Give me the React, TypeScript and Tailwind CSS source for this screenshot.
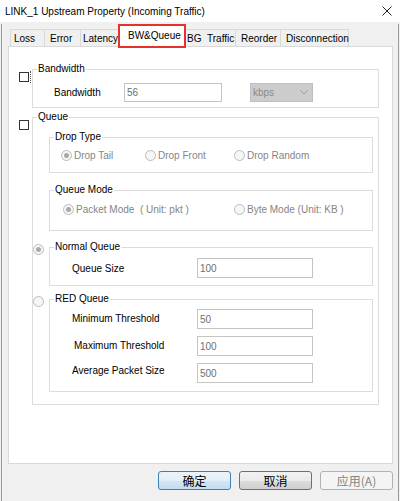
import type { ReactNode } from 'react';

function CheckBox() {
  return <span className="block w-[10px] h-[10px] border border-[#333333] bg-white" />;
}

function Radio({ checked = false }: { checked?: boolean }) {
  return (
    <span className="flex w-[11px] h-[11px] shrink-0 items-center justify-center rounded-full border border-[#bcbcbc] bg-[#f6f6f6]">
      {checked && <span className="block w-[5px] h-[5px] rounded-full bg-[#a9a9a9]" />}
    </span>
  );
}

function Group({ title, className, children }: { title: string; className: string; children?: ReactNode }) {
  return (
    <fieldset className={`border border-[#dcdcdc] ${className}`}>
      <legend className="ml-[4px] px-[1px] leading-[12px] text-black">{title}</legend>
      {children}
    </fieldset>
  );
}

function Field({ value, className }: { value: string; className: string }) {
  return (
    <div className={`flex items-center border border-[#c4c4c4] bg-white pl-[2px] text-[#707070] ${className}`}>
      {value}
    </div>
  );
}

function Option({ label, checked, className }: { label: string; checked?: boolean; className: string }) {
  return (
    <div className={`flex items-center gap-[2px] text-[#858585] ${className}`}>
      <Radio checked={checked} />
      <span className="whitespace-pre">{label}</span>
    </div>
  );
}

const tabs = [
  { label: 'Loss', w: 'w-[35px]', pl: 'pl-[3px]' },
  { label: 'Error', w: 'w-[37px]', pl: 'pl-[5px]' },
  { label: 'Latency', w: 'w-[39px]', pl: 'pl-[2px]' },
  { label: 'BW&Queue', w: 'w-[68px]', pl: 'pl-[8px]', active: true },
  { label: 'BG\u00a0\u00a0Traffic', w: 'w-[51px]', pl: 'pl-[1px]' },
  { label: 'Reorder', w: 'w-[46px]', pl: 'pl-[5px]' },
  { label: 'Disconnection', w: 'w-[69px]', pl: 'pl-[5px]' },
];

export default function App() {
  return (
    <div className="w-[400px] h-[501px] bg-[#f0f0f0] font-['Liberation_Sans',Arial,sans-serif] text-[10px] text-black overflow-hidden">
      {/* title bar */}
      <div className="flex h-[22px] items-center bg-white pl-[5px] pr-[8px]">
        <span>LINK_1 Upstream Property (Incoming Traffic)</span>
        <svg className="ml-auto" width="10" height="10" viewBox="0 0 10 10">
          <path d="M0.5 0.5L9.5 9.5M9.5 0.5L0.5 9.5" stroke="#222" strokeWidth="1" />
        </svg>
      </div>

      <div className="mx-[1px] h-[478px] border-x border-b border-[#9a9a9a] bg-[#f0f0f0]">
        {/* tabs */}
        <div className="mt-[2px] flex h-[22px] items-end pl-[8px]">
          {tabs.map((t, i) =>
            t.active ? (
              <div
                key={t.label}
                className={`relative z-10 -ml-px -mb-[2px] flex h-[24px] items-center self-end border-2 border-[#e5322d] bg-white ${t.w} ${t.pl}`}
              >
                <span className="-mt-[1px] whitespace-nowrap">{t.label}</span>
              </div>
            ) : (
              <div
                key={t.label}
                className={`flex h-[17px] items-center whitespace-nowrap border-x border-t border-[#d9d9d9] bg-[#f0f0f0] ${i > 0 ? '-ml-px' : ''} ${t.w} ${t.pl}`}
              >
                {t.label}
              </div>
            )
          )}
        </div>

        {/* tab panel */}
        <div className="ml-[6px] h-[418px] w-[385px] border border-[#d9d9d9] bg-white">
          <div className="mt-[16px] flex items-start">
            <div className="flex w-[23px] items-start">
              <span className="ml-[10px] mt-[9px]">
                <CheckBox />
              </span>
              <span className="ml-[1px] mt-[8px] h-[12px] border-l border-dotted border-[#555]" />
            </div>
            <Group title="Bandwidth" className="h-[45px] w-[347px]">
              <div className="mt-[8px] flex items-center pl-[21px]">
                <span className="w-[70px]">Bandwidth</span>
                <Field value="56" className="h-[19px] w-[98px]" />
                <div className="ml-[28px] flex h-[19px] w-[63px] items-center border border-[#bfbfbf] bg-[#cccccc] pl-[2px] text-[#8a8a8a]">
                  <span>kbps</span>
                  <svg className="ml-auto mr-[4px]" width="8" height="5" viewBox="0 0 8 5">
                    <path d="M0.5 0.5L4 4L7.5 0.5" fill="none" stroke="#9a9a9a" strokeWidth="1" />
                  </svg>
                </div>
              </div>
            </Group>
          </div>

          <div className="mt-[3px] flex items-start">
            <div className="w-[23px]">
              <span className="ml-[10px] mt-[9px] block w-[10px]">
                <CheckBox />
              </span>
            </div>
            <Group title="Queue" className="h-[294px] w-[347px]">
              <Group title="Drop Type" className="ml-[16px] mt-[8px] h-[42px] w-[324px]">
                <div className="mt-[6px] flex h-[12px] items-center pl-[11px]">
                  <Option label="Drop Tail" checked className="w-[84px]" />
                  <Option label="Drop Front" className="w-[89px]" />
                  <Option label="Drop Random" className="w-[100px]" />
                </div>
              </Group>

              <Group title="Queue Mode" className="ml-[16px] mt-[11px] h-[47px] w-[324px]">
                <div className="mt-[7px] flex h-[12px] items-center pl-[13px]">
                  <Option label={'Packet Mode  ( Unit: pkt )'} checked className="w-[171px]" />
                  <Option label="Byte Mode (Unit: KB )" className="w-[120px]" />
                </div>
              </Group>

              <div className="mt-[10px] flex items-start">
                <div className="w-[16px] pt-[3px]">
                  <Radio checked />
                </div>
                <Group title="Normal Queue" className="h-[45px] w-[324px]">
                  <div className="mt-[5px] flex items-center pl-[22px]">
                    <span className="w-[125px]">Queue Size</span>
                    <Field value="100" className="h-[20px] w-[116px]" />
                  </div>
                </Group>
              </div>

              <div className="mt-[7px] flex items-start">
                <div className="w-[16px] pt-[3px]">
                  <Radio />
                </div>
                <Group title="RED Queue" className="h-[99px] w-[324px]">
                  <div className="mt-[4px] flex flex-col gap-[7px] pl-[22px]">
                    <div className="flex items-center">
                      <span className="w-[125px] -mt-[2px]">Minimum Threshold</span>
                      <Field value="50" className="h-[20px] w-[116px]" />
                    </div>
                    <div className="flex items-center">
                      <span className="w-[125px] pl-[2px] -mt-[2px]">Maximum Threshold</span>
                      <Field value="100" className="h-[20px] w-[116px]" />
                    </div>
                    <div className="flex items-center">
                      <span className="w-[125px] -mt-[6px]">Average Packet Size</span>
                      <Field value="500" className="h-[20px] w-[116px]" />
                    </div>
                  </div>
                </Group>
              </div>
            </Group>
          </div>
        </div>

        {/* buttons */}
        <div className="mt-[7px] flex justify-end gap-[8px] pr-[5px] font-['Noto_Sans_CJK_SC',sans-serif] text-[12px]">
          <button className="flex h-[19px] w-[73px] items-center justify-center rounded-[3px] border border-[#3c7fb1] bg-[linear-gradient(to_bottom,#eaf3fa_0%,#e2eef7_50%,#d3e6f3_51%,#c4ddef_100%)] leading-none">
            确定
          </button>
          <button className="flex h-[19px] w-[73px] items-center justify-center rounded-[3px] border border-[#707070] bg-[linear-gradient(to_bottom,#f2f2f2_0%,#ebebeb_50%,#dddddd_51%,#cfcfcf_100%)] leading-none">
            取消
          </button>
          <button className="flex h-[19px] w-[73px] items-center justify-center rounded-[3px] border border-[#adb2b5] bg-[#f4f4f4] leading-none text-[#838383]">
            应用(A)
          </button>
        </div>
      </div>
    </div>
  );
}
